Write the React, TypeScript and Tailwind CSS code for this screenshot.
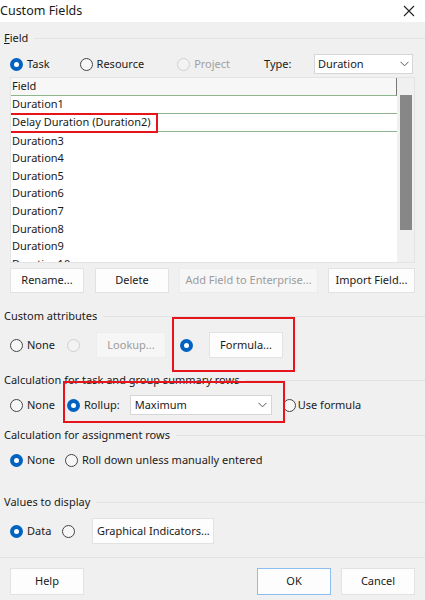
import React from "react";

const font = { fontFamily: '"Noto Sans", "Open Sans", sans-serif' };

function Radio({ checked = false, disabled = false, className = "" }: { checked?: boolean; disabled?: boolean; className?: string }) {
  if (checked) {
    return (
      <div className={"w-[13px] h-[13px] rounded-full bg-[#0062c1] flex items-center justify-center shrink-0 " + className}>
        <div className="w-[5px] h-[5px] rounded-full bg-white" />
      </div>
    );
  }
  return (
    <div
      className={
        "w-[13px] h-[13px] rounded-full shrink-0 border " +
        (disabled ? "border-[#d0d0d0] bg-[#f3f3f3] " : "border-[#444] bg-[#f7f7f7] ") +
        className
      }
    />
  );
}

function Chevron() {
  return (
    <svg width="9" height="6" viewBox="0 0 9 6" className="shrink-0">
      <path d="M0.5 0.8 L4.5 4.8 L8.5 0.8" fill="none" stroke="#555" strokeWidth="1" />
    </svg>
  );
}

function Btn({ children, className = "", disabled = false }: { children: React.ReactNode; className?: string; disabled?: boolean }) {
  return (
    <div
      className={
        "flex items-center justify-center border whitespace-nowrap shrink-0 " +
        (disabled ? "bg-[#f6f6f6] border-[#ececec] text-[#9c9c9c] " : "bg-[#fdfdfd] border-[#e2e2e2] text-[#1a1a1a] ") +
        className
      }
    >
      {children}
    </div>
  );
}

function Header({ label, className = "" }: { label: React.ReactNode; className?: string }) {
  return (
    <div className={"flex items-center h-[16px] pl-[4px] " + className}>
      <span className="leading-[16px] whitespace-nowrap">{label}</span>
      <div className="flex-1 h-px bg-[#e2e2e2] ml-[6px]" />
    </div>
  );
}

export default function App() {
  const rows = ["Duration3", "Duration4", "Duration5", "Duration6", "Duration7", "Duration8", "Duration9", "Duration10"];
  return (
    <div style={font} className="w-[425px] h-[600px] bg-[#f0f0f0] text-[#1a1a1a] text-[11px] overflow-hidden">
      {/* title bar */}
      <div className="h-[22px] bg-white flex items-center justify-between">
        <span className="text-[12.5px] leading-[16px]">Custom Fields</span>
        <svg width="12" height="12" viewBox="0 0 12 12" className="mr-[10px]">
          <path d="M1 1 L11 11 M11 1 L1 11" stroke="#222" strokeWidth="1.1" />
        </svg>
      </div>

      {/* Field section */}
      <Header label={<><span className="underline">F</span>ield</>} className="mt-[8px]" />
      <div className="mt-[8px] h-[20px] flex items-center pl-[10px] pr-[12px]">
        <Radio checked />
        <span className="ml-[4px]">Task</span>
        <Radio className="ml-[30px]" />
        <span className="ml-[4px]">Resource</span>
        <Radio disabled className="ml-[33px]" />
        <span className="ml-[4px] text-[#a0a0a0]">Project</span>
        <span className="ml-[34px]">Type:</span>
        <div className="ml-auto w-[99px] h-[20px] bg-white border border-[#d6d6d6] flex items-center justify-between px-[3px]">
          <span>Duration</span>
          <Chevron />
        </div>
      </div>

      {/* list */}
      <div className="mt-[3px] mx-[10px] h-[186px] flex border border-[#e4e4e4] bg-white overflow-hidden">
        <div className="flex-1 flex flex-col min-w-0">
          <div className="h-[18px] shrink-0 bg-[#f7f7f7] border-r border-[#777] border-b border-b-[#8fb58f] flex items-center pl-[1px]">
            Field
          </div>
          <div className="h-[18px] shrink-0 flex items-center pl-[1px] border-b border-[#8fb58f]">Duration1</div>
          <div className="h-[18px] shrink-0 flex items-center pl-[1px] border-b border-[#8fb58f] relative">
            <span>Delay Duration (Duration2)</span>
            <div className="absolute left-[-5px] top-[-1px] w-[152px] h-[20px] border-2 border-[#e8141c]" />
          </div>
          {rows.map((r) => (
            <div key={r} className="h-[17.6px] shrink-0 flex items-center pl-[1px]">
              {r}
            </div>
          ))}
        </div>
        <div className="w-[17px] shrink-0 bg-[#f0f0f0] pt-[17px] flex justify-center">
          <div className="w-[12px] h-[135px] bg-[#878787]" />
        </div>
      </div>

      {/* button row */}
      <div className="mt-[5px] mx-[10px] h-[25px] flex">
        <Btn className="w-[74px]">Rename...</Btn>
        <Btn className="w-[74px] ml-[11px]">Delete</Btn>
        <Btn className="w-[139px] ml-[10px]" disabled>Add Field to Enterprise...</Btn>
        <Btn className="w-[87px] ml-auto">Import Field...</Btn>
      </div>

      {/* Custom attributes */}
      <Header label="Custom attributes" className="mt-[15px]" />
      <div className="mt-[8px] h-[26px] flex items-center pl-[10px]">
        <Radio />
        <span className="ml-[4px]">None</span>
        <Radio disabled className="ml-[12px]" />
        <Btn className="ml-[16px] w-[70px] h-[26px]" disabled>Lookup...</Btn>
        <div className="relative ml-[14px] flex items-center h-[26px]">
          <Radio checked />
          <Btn className="ml-[16px] w-[74px] h-[26px]">Formula...</Btn>
          <div className="absolute left-[-8px] top-[-15px] w-[123px] h-[55px] border-2 border-[#e8141c]" />
        </div>
      </div>

      {/* Calculation summary */}
      <Header label="Calculation for task and group summary rows" className="mt-[14px]" />
      <div className="mt-[7px] h-[20px] flex items-center pl-[10px]">
        <Radio />
        <span className="ml-[4px]">None</span>
        <div className="relative ml-[12px] flex items-center h-[20px]">
          <Radio checked />
          <span className="ml-[4px]">Rollup:</span>
          <div className="ml-[10px] w-[142px] h-[20px] bg-white border border-[#d6d6d6] flex items-center justify-between px-[4px]">
            <span>Maximum</span>
            <Chevron />
          </div>
          <div className="absolute left-[-4px] top-[-14px] w-[222px] h-[42px] border-2 border-[#e8141c]" />
        </div>
        <Radio className="ml-[11px]" />
        <span className="ml-[2px]">Use formula</span>
      </div>

      {/* assignment rows */}
      <Header label="Calculation for assignment rows" className="mt-[12px]" />
      <div className="mt-[7px] h-[20px] flex items-center pl-[10px]">
        <Radio checked />
        <span className="ml-[4px]">None</span>
        <Radio className="ml-[10px]" />
        <span className="ml-[4px]">Roll down unless manually entered</span>
      </div>

      {/* values to display */}
      <Header label="Values to display" className="mt-[24px]" />
      <div className="mt-[8px] h-[26px] flex items-center pl-[10px]">
        <Radio checked />
        <span className="ml-[4px]">Data</span>
        <Radio className="ml-[11px]" />
        <Btn className="ml-[17px] w-[122px] h-[26px]">Graphical Indicators...</Btn>
      </div>

      <div className="mt-[13px] h-px bg-[#e2e2e2]" />

      <div className="mt-[10px] mx-[10px] h-[27px] flex">
        <Btn className="w-[74px]">Help</Btn>
        <Btn className="w-[74px] ml-auto !border-[#8cbdee]">OK</Btn>
        <Btn className="w-[74px] ml-[10px]">Cancel</Btn>
      </div>
    </div>
  );
}
